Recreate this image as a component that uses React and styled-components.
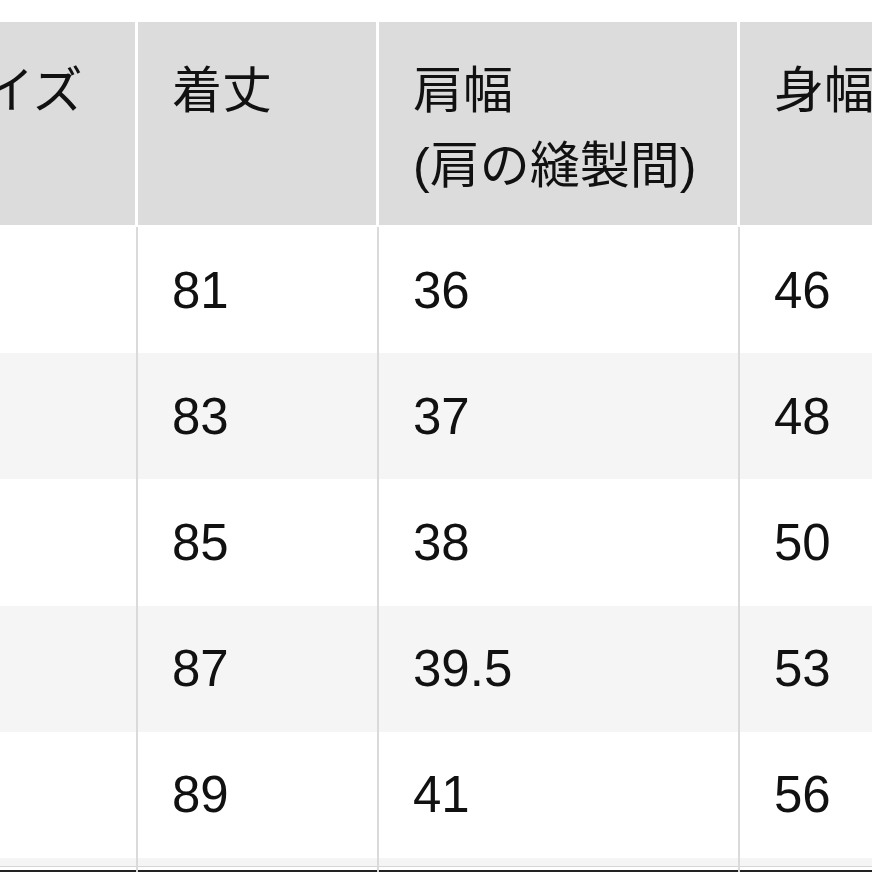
import React from "react";
import styled, { createGlobalStyle } from "styled-components";

const GlobalStyle = createGlobalStyle`
  html, body {
    margin: 0;
    padding: 0;
    background: #fff;
  }
  body {
    font-family: "Liberation Sans", "Noto Sans CJK JP", sans-serif;
    color: #111;
  }
`;

const Page = styled.div`
  width: 872px;
  height: 872px;
  overflow: hidden;
  background: #fff;
  padding-top: 22px;
  box-sizing: border-box;
`;

const Table = styled.div`
  display: grid;
  grid-template-columns: 238px 241px 361px 400px;
  margin-left: -100px;
  width: 1240px;
`;

const HeadCell = styled.div`
  background: #dcdcdc;
  height: 205px;
  box-sizing: border-box;
  padding: 32px 0 0 34px;
  border-right: 3px solid #fff;
  border-bottom: 2px solid #fff;
  font-size: 50px;
  line-height: 75px;
  white-space: nowrap;
`;

const Cell = styled.div`
  background: ${p => (p.$odd ? "#f5f5f5" : "#fff")};
  height: 126.2px;
  box-sizing: border-box;
  padding-left: 34px;
  border-right: 2px solid #dadada;
  display: flex;
  align-items: center;
  font-size: 51px;
  white-space: nowrap;
`;

const TailCell = styled.div`
  height: 20px;
  box-sizing: border-box;
  border-right: 2px solid #dadada;
  background: linear-gradient(#f5f5f5 0, #f5f5f5 8px, #d6d6d6 8px, #d6d6d6 9px, #fff 9px, #fff 12px, #222 12px);
`;

const head = ["サイズ", "着丈", ["肩幅", "(肩の縫製間)"], "身幅"];

const rows = [
  ["XS", "81", "36", "46"],
  ["S", "83", "37", "48"],
  ["M", "85", "38", "50"],
  ["L", "87", "39.5", "53"],
  ["XL", "89", "41", "56"],
];

export default function App() {
  return (
    <>
      <GlobalStyle />
      <Page>
        <Table>
          {head.map((h, i) => (
            <HeadCell key={i}>
              {Array.isArray(h) ? h.map((l, j) => <div key={j}>{l}</div>) : h}
            </HeadCell>
          ))}
          {rows.map((r, ri) =>
            r.map((v, ci) => (
              <Cell key={ri + "-" + ci} $odd={ri % 2 === 1}>
                {ci === 0 ? "" : v}
              </Cell>
            ))
          )}
          {head.map((_, i) => (
            <TailCell key={"t" + i} />
          ))}
        </Table>
      </Page>
    </>
  );
}
